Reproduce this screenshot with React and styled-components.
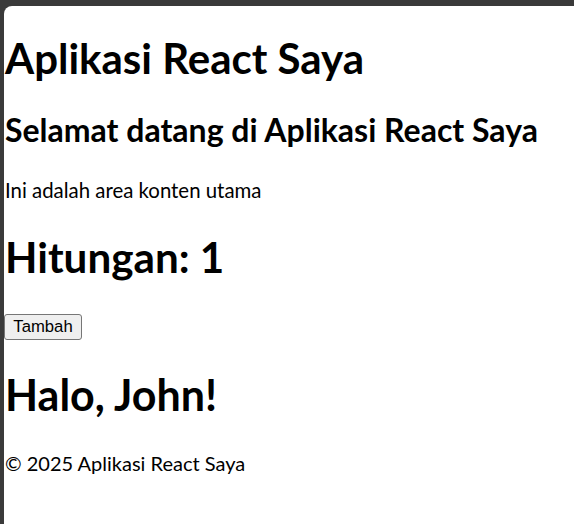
import React, { useState } from 'react'
import styled, { createGlobalStyle } from 'styled-components'

const GlobalStyle = createGlobalStyle`
  html, body {
    margin: 0;
    background: #3a3a3a;
  }
  body {
    font-family: Lato, 'Noto Sans', sans-serif;
    color: #000;
  }
`

const Frame = styled.div`
  margin: 6px 0 0 4px;
  min-height: calc(100vh - 6px);
  background: #fff;
  border-top-left-radius: 8px;
  display: flex;
  flex-direction: column;
  padding-left: 1px;
  box-sizing: border-box;
`

const Header = styled.header`
  display: flex;
  flex-direction: column;
`

const Main = styled.main`
  display: flex;
  flex-direction: column;
  align-items: flex-start;
`

const Counter = styled.div`
  display: flex;
  flex-direction: column;
  align-items: flex-start;
`

const Footer = styled.footer`
  display: flex;
  flex-direction: column;
`

const Title = styled.h1`
  margin: ${(p) => p.$top}px 0 0;
  font-size: ${(p) => p.$size}px;
  line-height: 1.2;
  font-weight: 700;
`

const Subtitle = styled.h2`
  margin: 27.5px 0 0;
  font-size: 32px;
  line-height: 1.2;
  font-weight: 700;
`

const Text = styled.p`
  margin: ${(p) => p.$top}px 0 0;
  font-size: ${(p) => p.$size}px;
  line-height: 1.2;
`

const Button = styled.button`
  margin-top: 32px;
  margin-left: -1px;
  width: 78px;
  height: 26px;
  padding: 0;
  font-family: 'Liberation Sans', Arial, sans-serif;
  font-size: 16.7px;
  color: #000;
  background: #efefef;
  border: 1px solid #767676;
  border-radius: 3px;
  cursor: pointer;
`

export default function App() {
  const [count, setCount] = useState(1)

  return (
    <>
      <GlobalStyle />
      <Frame>
        <Header>
          <Title $top={27} $size={42}>Aplikasi React Saya</Title>
        </Header>
        <Main>
          <Subtitle>Selamat datang di Aplikasi React Saya</Subtitle>
          <Text $top={29} $size={20.4}>Ini adalah area konten utama</Text>
          <Counter>
            <Title $top={29} $size={42.2}>Hitungan: {count}</Title>
            <Button onClick={() => setCount(count + 1)}>Tambah</Button>
          </Counter>
          <Title $top={28.5} $size={43}>Halo, John!</Title>
        </Main>
        <Footer>
          <Text $top={30.4} $size={20}>© 2025 Aplikasi React Saya</Text>
        </Footer>
      </Frame>
    </>
  )
}
